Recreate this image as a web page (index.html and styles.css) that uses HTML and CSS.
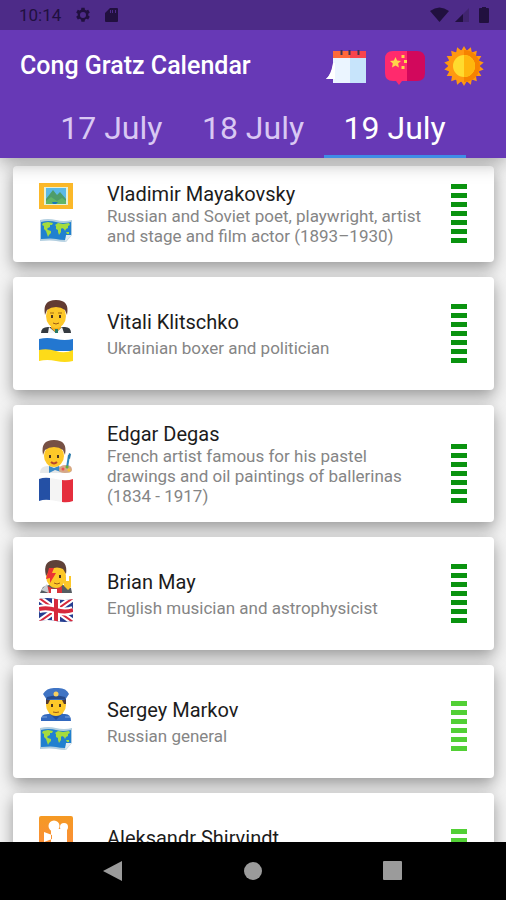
FILE: index.html
```html
<!DOCTYPE html>
<html lang="en">
<head>
<meta charset="utf-8">
<meta name="viewport" content="width=device-width, initial-scale=1">
<title>Cong Gratz Calendar</title>
<link rel="stylesheet" href="styles.css">
</head>
<body>
<svg class="sprites" aria-hidden="true">
  <symbol id="map" viewBox="0 0 34 26">
    <path d="M1 3q8-2 16 0t16 0v15l-6 7q-5 0-10-1t-16 0z" fill="#b3cfe0"/>
    <path d="M2 5q8-2 15 0t15 0v13h-4l-2 5q-5 0-9-1t-15 0z" fill="#2180cf"/>
    <path d="M4 6l5-1 5 1-1 2-2 0 0 2-2 1-1 1 1 1 3 1 0 2-2 2-1 2-1-3-1-3-2-2 0-3-2-1zM16 8l3-2 5 1 6-1 1 2-2 1 0 2-2 1-1 2-1-2-2-1-1 1 0 3-2 3-1-3 0-2-2-1 0-3zM27 15l3 0 0 2-2 0z" fill="#a5dc3c"/>
    <path d="M26 25l1-7 6 0z" fill="#e3ecf1"/>
  </symbol>
  <linearGradient id="film-fill" x1="0" y1="0" x2="0" y2="1"><stop offset="0" stop-color="#f59a23"/><stop offset="1" stop-color="#fb8c3a"/></linearGradient>
</svg>

<header class="top">
  <div class="status">
    <span class="status-left">
      <span>10:14</span>
      <svg width="16" height="16" viewBox="0 0 24 24"><path fill="#21103f" fill-rule="evenodd" d="M9.600 1h4.800l.5 3 2 1.200 2.900-1.100 2.400 4.100-2.300 2v2.600l2.300 2-2.400 4.100-2.900-1.100-2 1.200-.5 3H9.600l-.5-3-2-1.200-2.900 1.100-2.400-4.100 2.300-2v-2.600l-2.300-2 2.400-4.100 2.900 1.100 2-1.200zM12 7.500a4.500 4.500 0 1 0 0 9 4.500 4.500 0 0 0 0-9z"/></svg>
      <svg width="13" height="16" viewBox="0 0 13 16"><path fill="#21103f" fill-rule="evenodd" d="M5 1h7q1 0 1 1v12q0 1-1 1H1q-1 0-1-1V6zM5 3v3h1V3zM7 3v3h1V3zM10 3v3h1V3z"/></svg>
    </span>
    <span class="status-right">
      <svg width="19" height="16" viewBox="0 0 19 16"><path fill="#21103f" d="M0 4q9.500-7 19 0L9.500 15z"/></svg>
      <svg width="15" height="16" viewBox="0 0 15 16"><path fill="#412570" d="M15 1v14H1z"/><path fill="#21103f" d="M9 7v8H1z"/></svg>
      <svg width="10" height="16" viewBox="0 0 10 16"><path fill="#21103f" d="M3 0h4v1h2q1 0 1 1v13q0 1-1 1H1q-1 0-1-1V2q0-1 1-1h2z"/></svg>
    </span>
  </div>
  <div class="appbar">
    <h1>Cong Gratz Calendar</h1>
    <div class="actions">
      <button type="button" aria-label="Calendar">
        <svg width="40" height="40" viewBox="0 0 40 40"><path d="M7 10h33v27H7v-4H0q6-5 7-14z" fill="#ebf5ff"/><path d="M24 10h16v27H24z" fill="#c7e4fb"/><path d="M0 33q5-4 7-16h2v16z" fill="#fff"/><path d="M7 5h33v7H7z" fill="#ff6839"/><path d="M24 5h16v7H24z" fill="#f8434d"/><path d="M15.500 4v5M23.500 4v5M32.500 4v5" stroke="#3c3550" stroke-width="2"/></svg>
      </button>
      <button type="button" aria-label="Language">
        <svg width="40" height="40" viewBox="0 0 40 40"><path d="M8 5h14v30h-5l-3 4-3-4H8q-8 0-8-8V13q0-8 8-8z" fill="#ff2a6d"/><path d="M22 5h10q8 0 8 8v14q0 8-8 8H22z" fill="#d2085c"/><path d="M10.500 11l1.600 3.500 3.900.5-2.900 2.600.8 3.900-3.400-1.900-3.500 1.900.8-3.900L5 15l3.900-.5zM16.500 9h3v3h-3zM19 14h3v3h-3zM16.500 20h3v3h-3z" fill="#ffd54a"/></svg>
      </button>
      <button type="button" aria-label="Today">
        <svg width="40" height="40" viewBox="0 0 40 40"><defs><path id="ray" d="M20 0l3.500 6h-7z"/><g id="rays3"><use href="#ray"/><use href="#ray" transform="rotate(20 20 20)"/><use href="#ray" transform="rotate(40 20 20)"/></g></defs><g fill="#ff9811"><use href="#rays3"/><use href="#rays3" transform="rotate(60 20 20)"/><use href="#rays3" transform="rotate(120 20 20)"/><use href="#rays3" transform="rotate(180 20 20)"/><use href="#rays3" transform="rotate(240 20 20)"/><use href="#rays3" transform="rotate(300 20 20)"/><circle cx="20" cy="20" r="16"/></g><path d="M20 4a16 16 0 0 1 0 32z" fill="#f68200"/><circle cx="20" cy="20" r="11" fill="#ffdb2e"/><path d="M20 9a11 11 0 0 1 0 22z" fill="#ffb60d"/></svg>
      </button>
    </div>
  </div>
  <nav class="tabs" aria-label="Dates">
    <a href="#d17">17 July</a>
    <a href="#d18">18 July</a>
    <a href="#d19" class="active" aria-current="date">19 July</a>
  </nav>
</header>

<main class="list">
  <article class="card long">
    <div class="icons">
      <svg width="34" height="34" viewBox="0 0 34 34"><path d="M0 4h34v26H0z" fill="#fbb829"/><path d="M5 8h24v18H5z" fill="#e3f0d8"/><path d="M7 9h20v16H7z" fill="#5bb9e6"/><path d="M7 20l7-9 4 5 3-3 6 7v5H7z" fill="#4e9d69"/><path d="M7 22l5-4 6 4 5-3 4 3v3H7z" fill="#60b567"/><path d="M13 23h6l-2 2h-3z" fill="#1677bd"/></svg>
      <svg width="34" height="26"><use href="#map"/></svg>
    </div>
    <div class="text"><h2>Vladimir Mayakovsky</h2><p>Russian and Soviet poet, playwright, artist and stage and film actor (1893–1930)</p></div>
    <div class="level" style="--level:7"></div>
  </article>

  <article class="card">
    <div class="icons">
      <svg width="34" height="34" viewBox="0 0 34 34"><path d="M2 34q0-6 7-6h17q6 0 6 6z" fill="#343a40"/><path d="M12 25h10v4l-5 5-5-5z" fill="#f2ad1c"/><path d="M10 28l7 6 6-6 2 6H9z" fill="#f5f5f5"/><path d="M16 30h3v4h-3z" fill="#267a68"/><ellipse cx="17" cy="17" rx="10" ry="12" fill="#fdc829"/><path d="M6 16Q3 1 17 1q14 0 11 15l-2-5q-4-3-9-3t-9 3z" fill="#623b32"/><path d="M11 14h4M19 14h4" stroke="#a36a12"/><path d="M13 16v3M21 16v3" stroke="#493321" stroke-width="2"/><path d="M14 24q3 2 6 0" stroke="#9c5a15" fill="none"/></svg>
      <svg width="34" height="26" viewBox="0 0 34 26"><path d="M0 2q8-2 17 0t17 0v12H0z" fill="#2377d0"/><path d="M0 13q8-2 17 1t17-1v11q-8 2-17 0T0 24z" fill="#fddb19"/></svg>
    </div>
    <div class="text"><h2>Vitali Klitschko</h2><p>Ukrainian boxer and politician</p></div>
    <div class="level" style="--level:7"></div>
  </article>

  <article class="card long tall">
    <div class="icons">
      <svg width="34" height="34" viewBox="0 0 34 34"><path d="M1 34q0-7 8-7h13q8 0 9 7z" fill="#e5e8e9"/><path d="M10 27l5 2 5-2 2 6-6-2-6 3z" fill="#388ac6"/><ellipse cx="15" cy="17" rx="10" ry="11" fill="#fdc829"/><path d="M4 16Q1 1 15 1q14 0 11 15l-2-5q-4-3-9-3t-9 3z" fill="#765044"/><path d="M11 16v3M19 16v3" stroke="#493321" stroke-width="2"/><path d="M12 23q3 3 6 0" stroke="#b5472b" stroke-width="2" fill="none"/><path d="M20 31q0-5 7-5 6 0 6 5 0 3-7 3-6 0-6-3z" fill="#d6a887"/><path d="M28 29l2-13" stroke="#2d88bd" stroke-width="2"/><path d="M29 19l1-5 2 1-1 5z" fill="#2778a8"/><circle cx="24" cy="30" r="1.500" fill="#ec5353"/><circle cx="28" cy="28" r="1.500" fill="#61af3b"/><circle cx="30" cy="31" r="1.500" fill="#f8c62a"/></svg>
      <svg width="34" height="26" viewBox="0 0 34 26"><path d="M0 2q8-2 17 0t17 0v22q-8 2-17 0T0 24z" fill="#f4f4f4"/><path d="M0 2q5-2 11-1v22q-6-1-11 1z" fill="#2450a5"/><path d="M23 3q6 1 11-1v22q-5 2-11 1z" fill="#e52e3d"/></svg>
    </div>
    <div class="text"><h2>Edgar Degas</h2><p>French artist famous for his pastel drawings and oil paintings of ballerinas (1834 - 1917)</p></div>
    <div class="level" style="--level:7"></div>
  </article>

  <article class="card">
    <div class="icons">
      <svg width="34" height="34" viewBox="0 0 34 34"><path d="M1 34l3-6 6-2h14l8 3 1 5z" fill="#555c61"/><path d="M8 27l7 3 8-3v7H8z" fill="#d8343b"/><path d="M2 31l6-6 2 9z" fill="#c9cdd1"/><path d="M12 30h6v4h-6z" fill="#fff"/><ellipse cx="17" cy="17" rx="10" ry="12" fill="#fdc829"/><path d="M7 17Q3 1 17 1q12 0 10 14l-3-5q-6-3-12 0z" fill="#5f4138"/><path d="M10 9l5 0-2 5 4 0-6 10 0-5-4 1z" fill="#ea3333"/><path d="M21 16v3" stroke="#493321" stroke-width="2"/><path d="M15 24q3 2 6 0" stroke="#9c5a15" fill="none"/><path d="M25 22v-4l2 0v4l3 0v-5h2v11l-3 3-4-4z" fill="#fdc829"/></svg>
      <svg width="34" height="26" viewBox="0 0 34 26"><clipPath id="gb"><path d="M0 2q8-2 17 0t17 0v22q-8 2-17 0T0 24z"/></clipPath><g clip-path="url(#gb)"><path d="M0 0h34v26H0z" fill="#263e91"/><path d="M0 1l34 24M0 25L34 1" stroke="#fff" stroke-width="6"/><path d="M0 1l34 24M0 25L34 1" stroke="#d6293c" stroke-width="2"/><path d="M17 0v26M0 12q8-2 17 1t17 0" stroke="#fff" stroke-width="8" fill="none"/><path d="M17 0v26M0 12q8-2 17 1t17 0" stroke="#d6293c" stroke-width="4" fill="none"/></g></svg>
    </div>
    <div class="text"><h2>Brian May</h2><p>English musician and astrophysicist</p></div>
    <div class="level" style="--level:7"></div>
  </article>

  <article class="card">
    <div class="icons">
      <svg width="34" height="34" viewBox="0 0 34 34"><path d="M2 34q-1-7 7-7h17q6 0 6 7z" fill="#3268be"/><path d="M10 26l7 7 7-7z" fill="#234e9b"/><ellipse cx="17" cy="18" rx="10" ry="11" fill="#fdc829"/><path d="M7 12h20v5h-2l-2-4H11l-2 4H7z" fill="#543b34"/><path d="M4 7Q8 0 17 1q10-1 13 6l-4 6H8z" fill="#3f74c4"/><path d="M8 10q9-3 18 0l1 3q-10-2-20 0z" fill="#254a8d"/><circle cx="17" cy="7" r="2.500" fill="#f7d060"/><path d="M13 17v3M21 17v3" stroke="#493321" stroke-width="2"/><path d="M14 25q3 1 6 0" stroke="#9c5a15" fill="none"/><path d="M3 30h5M26 30h5" stroke="#80a6db"/></svg>
      <svg width="34" height="26"><use href="#map"/></svg>
    </div>
    <div class="text"><h2>Sergey Markov</h2><p>Russian general</p></div>
    <div class="level light" style="--level:6"></div>
  </article>

  <article class="card">
    <div class="icons">
      <svg width="34" height="34" viewBox="0 0 34 34"><rect y="1" width="34" height="32" rx="2" fill="url(#film-fill)"/><circle cx="15" cy="11" r="5.500" fill="#fff"/><circle cx="25" cy="12" r="4" fill="#fff"/><path d="M12 14h16v14H12zM13 20l-8-3v10l8-3zM14 27h4l-2 5h-3zM23 27h4l1 5h-3z" fill="#fff"/></svg>
      <svg width="34" height="26"><use href="#map"/></svg>
    </div>
    <div class="text"><h2>Aleksandr Shirvindt</h2><p></p></div>
    <div class="level light" style="--level:6"></div>
  </article>
</main>

<footer class="sysnav">
  <button type="button" aria-label="Back"><svg width="22" height="22" viewBox="0 0 22 22"><path d="M20 1v20L1 11z" fill="#9b9b9b"/></svg></button>
  <button type="button" aria-label="Home"><svg width="22" height="22" viewBox="0 0 22 22"><circle cx="11" cy="11" r="9" fill="#9b9b9b"/></svg></button>
  <button type="button" aria-label="Recent apps"><svg width="22" height="22" viewBox="0 0 22 22"><rect x="1" y="1" width="19" height="19" rx="1" fill="#9b9b9b"/></svg></button>
</footer>
</body>
</html>
```
FILE: styles.css
```css
* { box-sizing: border-box; }

body {
  margin: 0;
  height: 100vh;
  display: flex;
  flex-direction: column;
  overflow: hidden;
  background: #f3f3f3;
  font-family: Roboto, "Liberation Sans", sans-serif;
}

svg { display: block; flex: none; }
h1, h2, p { margin: 0; }

button {
  padding: 0;
  border: 0;
  background: none;
}

.sprites {
  position: absolute;
  width: 0;
  height: 0;
}

.top {
  position: relative;
  z-index: 1;
  flex: none;
  background: #6739b6;
  color: #fff;
  box-shadow: 0 4px 18px rgba(0, 0, 0, 0.35);
}

.status {
  display: flex;
  justify-content: space-between;
  height: 30px;
  padding: 0 17px 0 19px;
  background: #4d2b88;
  color: #21103f;
  font-size: 17px;
}

.status-left, .status-right {
  display: flex;
  align-items: center;
}

.status-left { gap: 14px; }
.status-right { gap: 5px; }
.status-right svg:last-child { margin-left: 5px; }

.appbar {
  display: flex;
  align-items: center;
  justify-content: space-between;
  height: 71px;
  padding: 0 22px 0 20px;
}

h1 {
  font-size: 25px;
  font-weight: 500;
  line-height: 32px;
  white-space: nowrap;
}

.actions {
  display: flex;
  gap: 19px;
}

.tabs {
  display: flex;
  justify-content: center;
}

.tabs a {
  width: 28%;
  height: 57px;
  border-bottom: 3px solid transparent;
  color: #d9c8f3;
  font-size: 32px;
  line-height: 54px;
  text-align: center;
  text-decoration: none;
}

.tabs .active {
  border-color: #3f8de6;
  color: #fff;
}

.list {
  flex: 1;
  min-height: 0;
  overflow: hidden;
  display: flex;
  flex-direction: column;
  gap: 15px;
  padding: 8px 12px 0 13px;
}

.card {
  flex: none;
  display: flex;
  align-items: center;
  min-height: 113px;
  padding: 0 27px 0 26px;
  border-radius: 4px;
  background: #fff;
  box-shadow: 0 6px 16px rgba(0, 0, 0, 0.38);
}

.card.long { min-height: 96px; }
.card.tall { min-height: 117px; }

.icons, .level {
  flex: none;
  align-self: flex-end;
  margin-bottom: 27px;
}

.long .icons, .long .level { margin-bottom: 19px; }

.icons {
  display: flex;
  flex-direction: column;
  gap: 4px;
  width: 34px;
}

.text {
  flex: 1;
  padding: 16px 24px 16px 34px;
}

h2 {
  margin-bottom: 4px;
  color: #1c1c1c;
  font-size: 20px;
  font-weight: 400;
  line-height: 24px;
}

.long h2 { margin-bottom: 0; }

p {
  min-height: 20px;
  color: #858585;
  font-size: 17px;
  line-height: 20px;
}

.level {
  width: 16px;
  height: calc(var(--level) * 9px - 4px);
  background: repeating-linear-gradient(#0a930f 0 5px, transparent 5px 9px);
}

.level.light {
  background: repeating-linear-gradient(#52d035 0 5px, transparent 5px 9px);
}

.sysnav {
  position: relative;
  z-index: 1;
  flex: none;
  display: flex;
  align-items: center;
  justify-content: center;
  gap: 118px;
  height: 58px;
  background: #000;
}
```
